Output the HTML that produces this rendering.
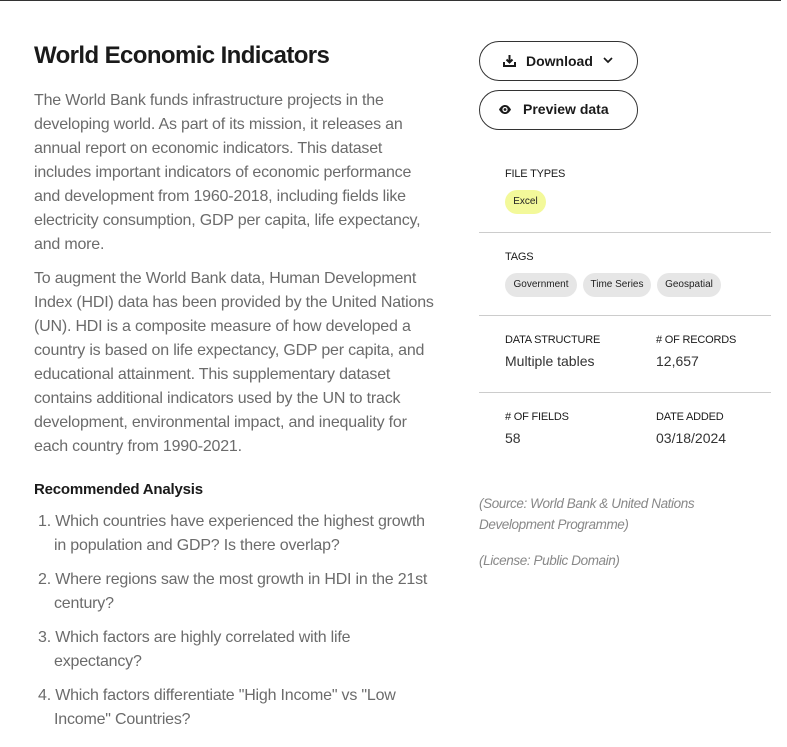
<!DOCTYPE html>
<html><head><meta charset="utf-8"><style>
*{margin:0;padding:0;box-sizing:border-box}
body{width:787px;height:747px;background:#fff;position:relative;overflow:hidden;font-family:"Liberation Sans",sans-serif}
.topline{position:absolute;left:0;top:0;width:781px;height:1px;background:#333}
.a{position:absolute;white-space:nowrap}
h1{position:absolute;left:34px;top:42px;font-size:24px;font-weight:bold;color:#1a1a1a;letter-spacing:-0.6px}
.p{position:absolute;left:34px;color:#6b6b6b;font-size:16px;line-height:24px;letter-spacing:-0.2px;white-space:nowrap}
.h2{position:absolute;left:34px;top:481px;font-size:15px;font-weight:bold;color:#1a1a1a;letter-spacing:-0.2px}
.btn{position:absolute;left:479px;width:159px;height:40px;border:1.3px solid #333;border-radius:20px;font-size:14px;font-weight:bold;color:#1a1a1a}
.lbl{position:absolute;font-size:11px;color:#1a1a1a;letter-spacing:-0.2px}
.val{position:absolute;font-size:14px;color:#333}
.chip{position:absolute;height:24px;border-radius:12px;background:#e6e6e6;font-size:10px;color:#222;line-height:24px;text-align:center}
.hr{position:absolute;left:479px;width:292px;height:1px;background:#ccc}
.it{position:absolute;left:479px;font-style:italic;color:#888;font-size:13.5px;line-height:21px;letter-spacing:-0.4px;white-space:nowrap}
</style></head><body>
<div class="topline"></div>
<h1>World Economic Indicators</h1>
<div class="p" style="top:89px">The World Bank funds infrastructure projects in the<br>developing world. As part of its mission, it releases an<br>annual report on economic indicators. This dataset<br>includes important indicators of economic performance<br>and development from 1960-2018, including fields like<br>electricity consumption, GDP per capita, life expectancy,<br>and more.</div>
<div class="p" style="top:267px">To augment the World Bank data, Human Development<br>Index (HDI) data has been provided by the United Nations<br>(UN). HDI is a composite measure of how developed a<br>country is based on life expectancy, GDP per capita, and<br>educational attainment. This supplementary dataset<br>contains additional indicators used by the UN to track<br>development, environmental impact, and inequality for<br>each country from 1990-2021.</div>
<div class="h2">Recommended Analysis</div>
<div class="p" style="top:510px;left:38px">1. Which countries have experienced the highest growth<br><span style="padding-left:16px"></span>in population and GDP? Is there overlap?</div>
<div class="p" style="top:568px;left:38px">2. Where regions saw the most growth in HDI in the 21st<br><span style="padding-left:16px"></span>century?</div>
<div class="p" style="top:626px;left:38px">3. Which factors are highly correlated with life<br><span style="padding-left:16px"></span>expectancy?</div>
<div class="p" style="top:684px;left:38px">4. Which factors differentiate "High Income" vs "Low<br><span style="padding-left:16px"></span>Income" Countries?</div>

<div class="btn" style="top:41px">
<svg class="a" style="left:23px;top:12px" width="13" height="13" viewBox="0 0 13 13"><path d="M6.5 1v7M3.5 5.5l3 3 3-3" stroke="#1a1a1a" stroke-width="2" fill="none"/><path d="M1 8v4h11V8" stroke="#1a1a1a" stroke-width="2" fill="none"/></svg>
<span class="a" style="left:46px;top:11px">Download</span>
<svg class="a" style="left:123px;top:14px" width="10" height="8" viewBox="0 0 10 8"><path d="M1 2l4 4 4-4" stroke="#1a1a1a" stroke-width="1.7" fill="none"/></svg>
</div>
<div class="btn" style="top:90px">
<svg class="a" style="left:18px;top:13px" width="14" height="11" viewBox="0 0 14 11"><path d="M1 5.5C3 2 5 1 7 1s4 1 6 4.5C11 9 9 10 7 10S3 9 1 5.5z" fill="#1a1a1a"/><circle cx="7" cy="5.5" r="2.6" fill="#fff"/><circle cx="7" cy="5.5" r="1.4" fill="#1a1a1a"/></svg>
<span class="a" style="left:43px;top:10px">Preview data</span>
</div>

<div class="lbl" style="left:505px;top:168px">FILE TYPES</div>
<div class="chip" style="left:505px;top:190px;width:41px;background:#f3f99a">Excel</div>
<div class="hr" style="top:232px"></div>
<div class="lbl" style="left:505px;top:251px">TAGS</div>
<div class="chip" style="left:505px;top:273px;width:72px">Government</div>
<div class="chip" style="left:583px;top:273px;width:68px">Time Series</div>
<div class="chip" style="left:657px;top:273px;width:64px">Geospatial</div>
<div class="hr" style="top:315px"></div>
<div class="lbl" style="left:505px;top:334px">DATA STRUCTURE</div>
<div class="lbl" style="left:656px;top:334px"># OF RECORDS</div>
<div class="val" style="left:505px;top:353px">Multiple tables</div>
<div class="val" style="left:656px;top:353px">12,657</div>
<div class="hr" style="top:392px"></div>
<div class="lbl" style="left:505px;top:411px"># OF FIELDS</div>
<div class="lbl" style="left:656px;top:411px">DATE ADDED</div>
<div class="val" style="left:505px;top:430px">58</div>
<div class="val" style="left:656px;top:430px">03/18/2024</div>
<div class="it" style="top:493px">(Source: World Bank &amp; United Nations<br>Development Programme)</div>
<div class="it" style="top:550px">(License: Public Domain)</div>
</body></html>
